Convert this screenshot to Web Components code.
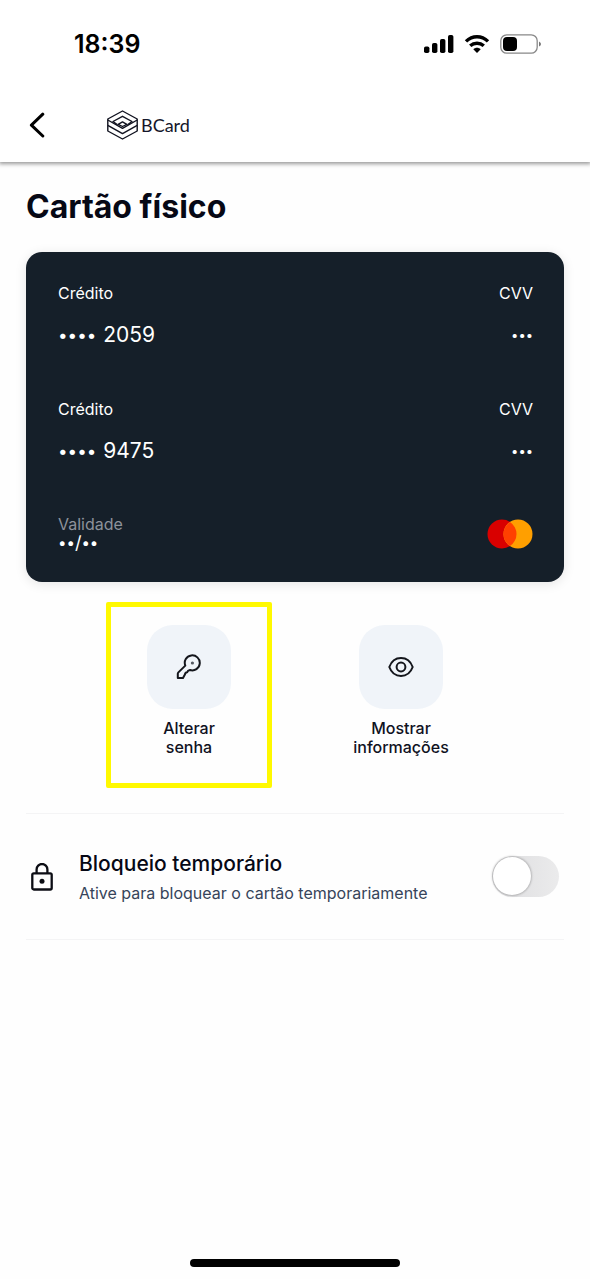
<!DOCTYPE html>
<html lang="pt-BR">
<head>
<meta charset="utf-8">
<meta name="viewport" content="width=device-width, initial-scale=1">
<title>Cartão físico</title>
<style>
  html, body { margin: 0; background: #fefefe; }
  body { font-family: Inter, "Liberation Sans", sans-serif; color: #060815; }
</style>
</head>
<body>
<card-screen></card-screen>

<script>
const define = (name, html) => customElements.define(name, class extends HTMLElement {
  connectedCallback() {
    if (this.shadowRoot) return;
    const t = document.createElement('template');
    t.innerHTML = '<style>*{box-sizing:border-box}svg{display:block}</style>' + html;
    this.attachShadow({ mode: 'open' }).append(t.content.cloneNode(true));
  }
});

define('status-bar', `
<style>
  :host { display: flex; justify-content: space-between; align-items: center; height: 88px; padding: 0 49px 0 74px; color: #000; }
  time { font-size: 25px; line-height: 32px; font-weight: 600; }
  div { display: flex; align-items: center; gap: 10px; }
</style>
<time>18:39</time>
<div>
  <svg width="30" height="20" viewBox="0 0 30 20" aria-hidden="true">
    <rect x="0" y="12.500" width="5.400" height="6.500" rx="1.800"/><rect x="8" y="9" width="5.400" height="10" rx="1.800"/>
    <rect x="16" y="5" width="5.400" height="14" rx="1.800"/><rect x="24" y="1" width="5.400" height="18" rx="1.800"/>
  </svg>
  <svg width="26" height="20" viewBox="0 0 26 20" fill="none" stroke="#000" stroke-width="3.400" aria-hidden="true">
    <path d="M2 7.400C8.400 1.200 17.600 1.200 24 7.400"/><path d="M6.200 11.800C10.100 8.300 15.900 8.300 19.800 11.800"/>
    <path d="M9.300 15.200C11.500 13.200 14.500 13.200 16.700 15.200L13 19Z" fill="#000" stroke="none"/>
  </svg>
  <svg width="41" height="20" viewBox="0 0 41 20" aria-hidden="true">
    <rect x=".8" y=".8" width="36.400" height="18.400" rx="6" fill="none" stroke="#888" stroke-width="1.300"/>
    <rect x="3" y="3" width="14" height="14" rx="4"/><path d="M39 7.500q2 1 2 2.500t-2 2.500z" fill="#777"/>
  </svg>
</div>`);

define('brand-logo', `
<style>
  :host { display: flex; align-items: center; gap: 3px; color: #14162a; }
  span { font-family: Lato, sans-serif; font-size: 18px; line-height: 24px; }
</style>
<svg width="31" height="30" viewBox="0 0 31 30" fill="none" stroke="#10121f" stroke-width="1.400" stroke-linejoin="round" aria-hidden="true">
  <path d="M15.500 1 30.200 9v12L15.500 29 .8 21V9Z"/>
  <path d="M.8 10 15.500 18.300 30.200 10M.8 15.300 15.500 23.600 30.200 15.300"/>
  <path d="M10.500 14.800 6 11.500 15.500 6.300 25 11.500 20.500 14.800"/>
  <path d="M11.200 14.300 15.500 11.900 19.800 14.300 15.500 16.500Z"/>
</svg>
<span>BCard</span>`);

define('nav-bar', `
<style>
  :host { display: flex; align-items: center; height: 74px; padding: 0 24px; gap: 58px; }
  button { appearance: none; border: 0; background: none; padding: 0; width: 25px; height: 32px; display: grid; place-items: center; }
</style>
<button type="button" aria-label="Voltar">
  <svg width="16" height="26" viewBox="0 0 16 26" fill="none" stroke="#000" stroke-width="3" stroke-linecap="round" stroke-linejoin="round"><path d="M13.800 2.200 2.400 13.200l11.400 10.800"/></svg>
</button>
<slot></slot>`);

define('card-line', `
<style>
  :host { display: flex; justify-content: space-between; }
  div { display: grid; gap: 18px; }
  .end { text-align: right; }
  .label { font-size: 16px; line-height: 20px; }
  .number { display: flex; align-items: center; gap: 7px; font-size: 21px; line-height: 28px; }
  .dots { font-size: 17px; }
  .cvv { font-size: 13px; line-height: 28px; }
</style>
<div><span class="label">Crédito</span><span class="number"><span class="dots">••••</span><slot></slot></span></div>
<div class="end"><span class="label">CVV</span><span class="cvv">•••</span></div>`);

define('bank-card', `
<style>
  :host { display: grid; gap: 50px; padding: 31px 31px 29px 32px; border-radius: 16px; background: #151f29; color: #fff; box-shadow: 0 2px 12px rgba(0,0,0,.1); }
  footer { display: flex; justify-content: space-between; align-items: center; }
  footer div { display: grid; }
  .label { color: #8d929b; font-size: 16px; line-height: 18px; }
  .date { display: flex; align-items: center; font-size: 15px; line-height: 20px; }
  .slash { font-size: 18px; }
</style>
<slot></slot>
<footer>
  <div><span class="label">Validade</span><span class="date">••<span class="slash">/</span>••</span></div>
  <svg width="46" height="30" viewBox="0 0 46 30" role="img" aria-label="Mastercard">
    <circle cx="15" cy="15" r="14.500" fill="#d90000"/><circle cx="31" cy="15" r="14.500" fill="#ff9f00"/>
    <path d="M23 2.900a14.500 14.500 0 0 1 0 24.200 14.500 14.500 0 0 1 0-24.200Z" fill="#ff4000"/>
  </svg>
</footer>`);

define('action-button', `
<style>
  :host { display: block; width: 166px; height: 186px; border: 5px solid transparent; border-radius: 2px; }
  :host([highlighted]) { border-color: #fff900; }
  button { appearance: none; border: 0; background: none; width: 100%; padding: 18px 0 0; display: grid; justify-items: center; gap: 10px; font: 500 16px/19px Inter, "Liberation Sans", sans-serif; color: #10121f; }
  .tile { width: 84px; height: 84px; border-radius: 26px; background: #f0f4f9; display: grid; place-items: center; }
</style>
<button type="button"><span class="tile"><slot name="icon"></slot></span><span><slot></slot></span></button>`);

define('setting-row', `
<style>
  :host { display: flex; align-items: center; height: 127px; padding: 0 5px; border: solid #f4f4f5; border-width: 1px 0; }
  label { flex: 1; display: grid; gap: 2px; padding-left: 26px; }
  .name { font-size: 21px; line-height: 30px; font-weight: 500; }
  .hint { font-size: 16px; line-height: 24px; color: #36445a; }
  input { appearance: none; margin: 0; width: 67px; height: 41px; padding: 1px; border-radius: 21px; background: linear-gradient(90deg, #dcdcde, #ebebec); display: flex; }
  input::before { content: ""; width: 38px; height: 38px; border-radius: 50%; background: #fff; box-shadow: 0 0 2px 1px rgba(0,0,0,.2); }
</style>
<svg width="22" height="28" viewBox="0 0 22 28" fill="none" stroke="#0c0d14" stroke-width="2.300" aria-hidden="true">
  <rect x="1.300" y="10.300" width="19.400" height="16.200" rx="1.500"/><path d="M5.600 10V6.400a5.400 5.400 0 0 1 10.800 0V10"/><circle cx="11" cy="18.300" r="2.500" fill="#0c0d14" stroke="none"/>
</svg>
<label for="toggle"><span class="name"><slot name="name"></slot></span><span class="hint"><slot></slot></span></label>
<input id="toggle" type="checkbox" role="switch">`);

define('card-screen', `
<style>
  :host { display: flex; flex-direction: column; min-height: 100vh; }
  header { background: #fff; box-shadow: 0 1px 4px 1px rgba(0,0,0,.4); }
  main { padding: 24px 26px 0; }
  h1 { margin: 0 0 25px; font-size: 32px; line-height: 41px; font-weight: 700; }
  .actions { display: flex; justify-content: center; gap: 46px; padding: 20px 0 25px; }
  .home { width: 210px; height: 8px; border-radius: 4px; background: #000; margin: auto auto 12px; }
</style>
<header><status-bar></status-bar><nav-bar><brand-logo></brand-logo></nav-bar></header>
<main>
  <h1>Cartão físico</h1>
  <bank-card><card-line>2059</card-line><card-line>9475</card-line></bank-card>
  <div class="actions">
    <action-button highlighted>
      <svg slot="icon" width="26" height="26" viewBox="0 0 26 26" fill="none" stroke="#14161c" stroke-width="2" stroke-linejoin="round" aria-hidden="true">
        <path d="M9.300 11.600A7.500 7.500 0 1 1 14 16C12.300 16.300 11.500 17 11.200 18.200 9.600 18.300 9 19.200 8.900 20.600L7 24H1.800V19.800Q1.800 19 2.400 18.400Z"/><circle cx="16.400" cy="9" r="1.600" fill="#555a62" stroke="none"/>
      </svg>
      Alterar<br>senha
    </action-button>
    <action-button>
      <svg slot="icon" width="26" height="22" viewBox="0 0 26 22" fill="none" stroke="#14161c" stroke-width="2" aria-hidden="true">
        <path d="M1.300 11C3.500 5 7.800 2 13 2s9.500 3 11.700 9C22.500 17 18.200 20 13 20S3.500 17 1.300 11Z" stroke-linejoin="round"/><circle cx="13" cy="11" r="4.400"/>
      </svg>
      Mostrar<br>informações
    </action-button>
  </div>
  <setting-row><span slot="name">Bloqueio temporário</span>Ative para bloquear o cartão temporariamente</setting-row>
</main>
<div class="home"></div>`);
</script>
</body>
</html>
